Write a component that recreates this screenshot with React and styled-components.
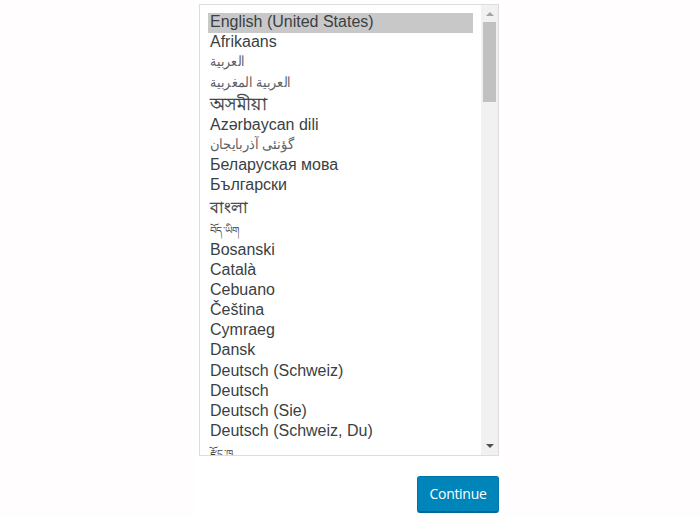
import React from "react";
import styled, { createGlobalStyle } from "styled-components";

const GlobalStyle = createGlobalStyle`
  *, *::before, *::after { box-sizing: border-box; }
  html, body { margin: 0; height: 100%; overflow: hidden; background: #fffdfd; }
`;

const Panel = styled.main`
  width: 309px;
  height: 517px;
  margin-left: 195px;
  padding: 4px 5px 0 4px;
  background: #fff;
  display: flex;
  flex-direction: column;
  align-items: flex-end;
  gap: 20px;
`;

const ListBox = styled.div`
  width: 300px;
  height: 452px;
  flex: none;
  display: flex;
  border: 1px solid #ddd;
  background: #fff;
  overflow: hidden;
`;

const Options = styled.div`
  flex: 1;
  padding: 8px 8px 0;
`;

const Option = styled.div`
  height: ${(p) => p.$height || 20}px;
  padding-left: 2px;
  padding-top: ${(p) => p.$drop || 0}px;
  background: ${(p) => (p.$selected ? "#c8c8c8" : "transparent")};
  color: ${(p) => p.$color || "#3a3f44"};
  font-family: "Liberation Sans", Arial, sans-serif;
  font-size: ${(p) => p.$size || 16}px;
  line-height: ${(p) => p.$line || 18}px;
  white-space: nowrap;
  -webkit-text-stroke: ${(p) => p.$weight || 0}px currentColor;
`;

const Label = styled.span`
  display: inline-block;
  transform-origin: 0 50%;
  transform: scaleX(${(p) => p.$stretch || 1});
`;

const Scrollbar = styled.div`
  width: 17px;
  display: flex;
  flex-direction: column;
  align-items: center;
  background: #f1f1f1;
`;

const ArrowButton = styled.div`
  width: 17px;
  height: 17px;
  display: grid;
  place-items: center;
  padding-bottom: ${(p) => p.$lift || 0}px;
  color: ${(p) => p.$color};
`;

const Thumb = styled.div`
  width: 13px;
  height: 80px;
  margin-bottom: auto;
  background: #c1c1c1;
`;

const ContinueButton = styled.button`
  width: 82px;
  height: 37px;
  padding: 0 0 1px;
  border: 1px solid #0073aa;
  border-bottom: 2px solid #006799;
  border-radius: 3px;
  background: #0085ba;
  color: #fff;
  font: 14px/34px "Open Sans", sans-serif;
  letter-spacing: -0.3px;
  text-align: center;
`;

const languages = [
  { name: "English (United States)", selected: true },
  { name: "Afrikaans" },
  { name: "العربية", size: 14, line: 16, stretch: 0.89, color: "#5c6064" },
  { name: "العربية المغربية", size: 14, stretch: 0.9, color: "#5c6064" },
  { name: "অসমীয়া", height: 23, drop: 3, size: 17, stretch: 1.03, weight: 0.3 },
  { name: "Azərbaycan dili" },
  { name: "گؤنئی آذربایجان", size: 14, line: 16, stretch: 0.935, color: "#5c6064" },
  { name: "Беларуская мова" },
  { name: "Български" },
  { name: "বাংলা", height: 25, drop: 3, stretch: 0.99, weight: 0.3 },
  { name: "བོད་ཡིག", size: 10, drop: 1, stretch: 1.05 },
  { name: "Bosanski" },
  { name: "Català" },
  { name: "Cebuano" },
  { name: "Čeština" },
  { name: "Cymraeg" },
  { name: "Dansk", height: 21 },
  { name: "Deutsch (Schweiz)" },
  { name: "Deutsch" },
  { name: "Deutsch (Sie)" },
  { name: "Deutsch (Schweiz, Du)" },
  { name: "རྫོང་ཁ", size: 10, drop: 3, stretch: 1.05 },
];

export default function App() {
  return (
    <>
      <GlobalStyle />
      <Panel>
        <ListBox role="listbox">
          <Options>
            {languages.map((l) => (
              <Option
                key={l.name}
                role="option"
                $selected={l.selected}
                $height={l.height}
                $size={l.size}
                $line={l.line}
                $drop={l.drop}
                $color={l.color}
                $weight={l.weight}
              >
                <Label $stretch={l.stretch}>{l.name}</Label>
              </Option>
            ))}
          </Options>
          <Scrollbar>
            <ArrowButton $color="#a3a3a3">
              <svg width="8" height="4" viewBox="0 0 8 4"><path d="M0 4L4 0L8 4Z" fill="currentColor" /></svg>
            </ArrowButton>
            <Thumb />
            <ArrowButton $color="#505050" $lift={2}>
              <svg width="8" height="4" viewBox="0 0 8 4"><path d="M0 0L4 4L8 0Z" fill="currentColor" /></svg>
            </ArrowButton>
          </Scrollbar>
        </ListBox>
        <ContinueButton type="button">Continue</ContinueButton>
      </Panel>
    </>
  );
}
